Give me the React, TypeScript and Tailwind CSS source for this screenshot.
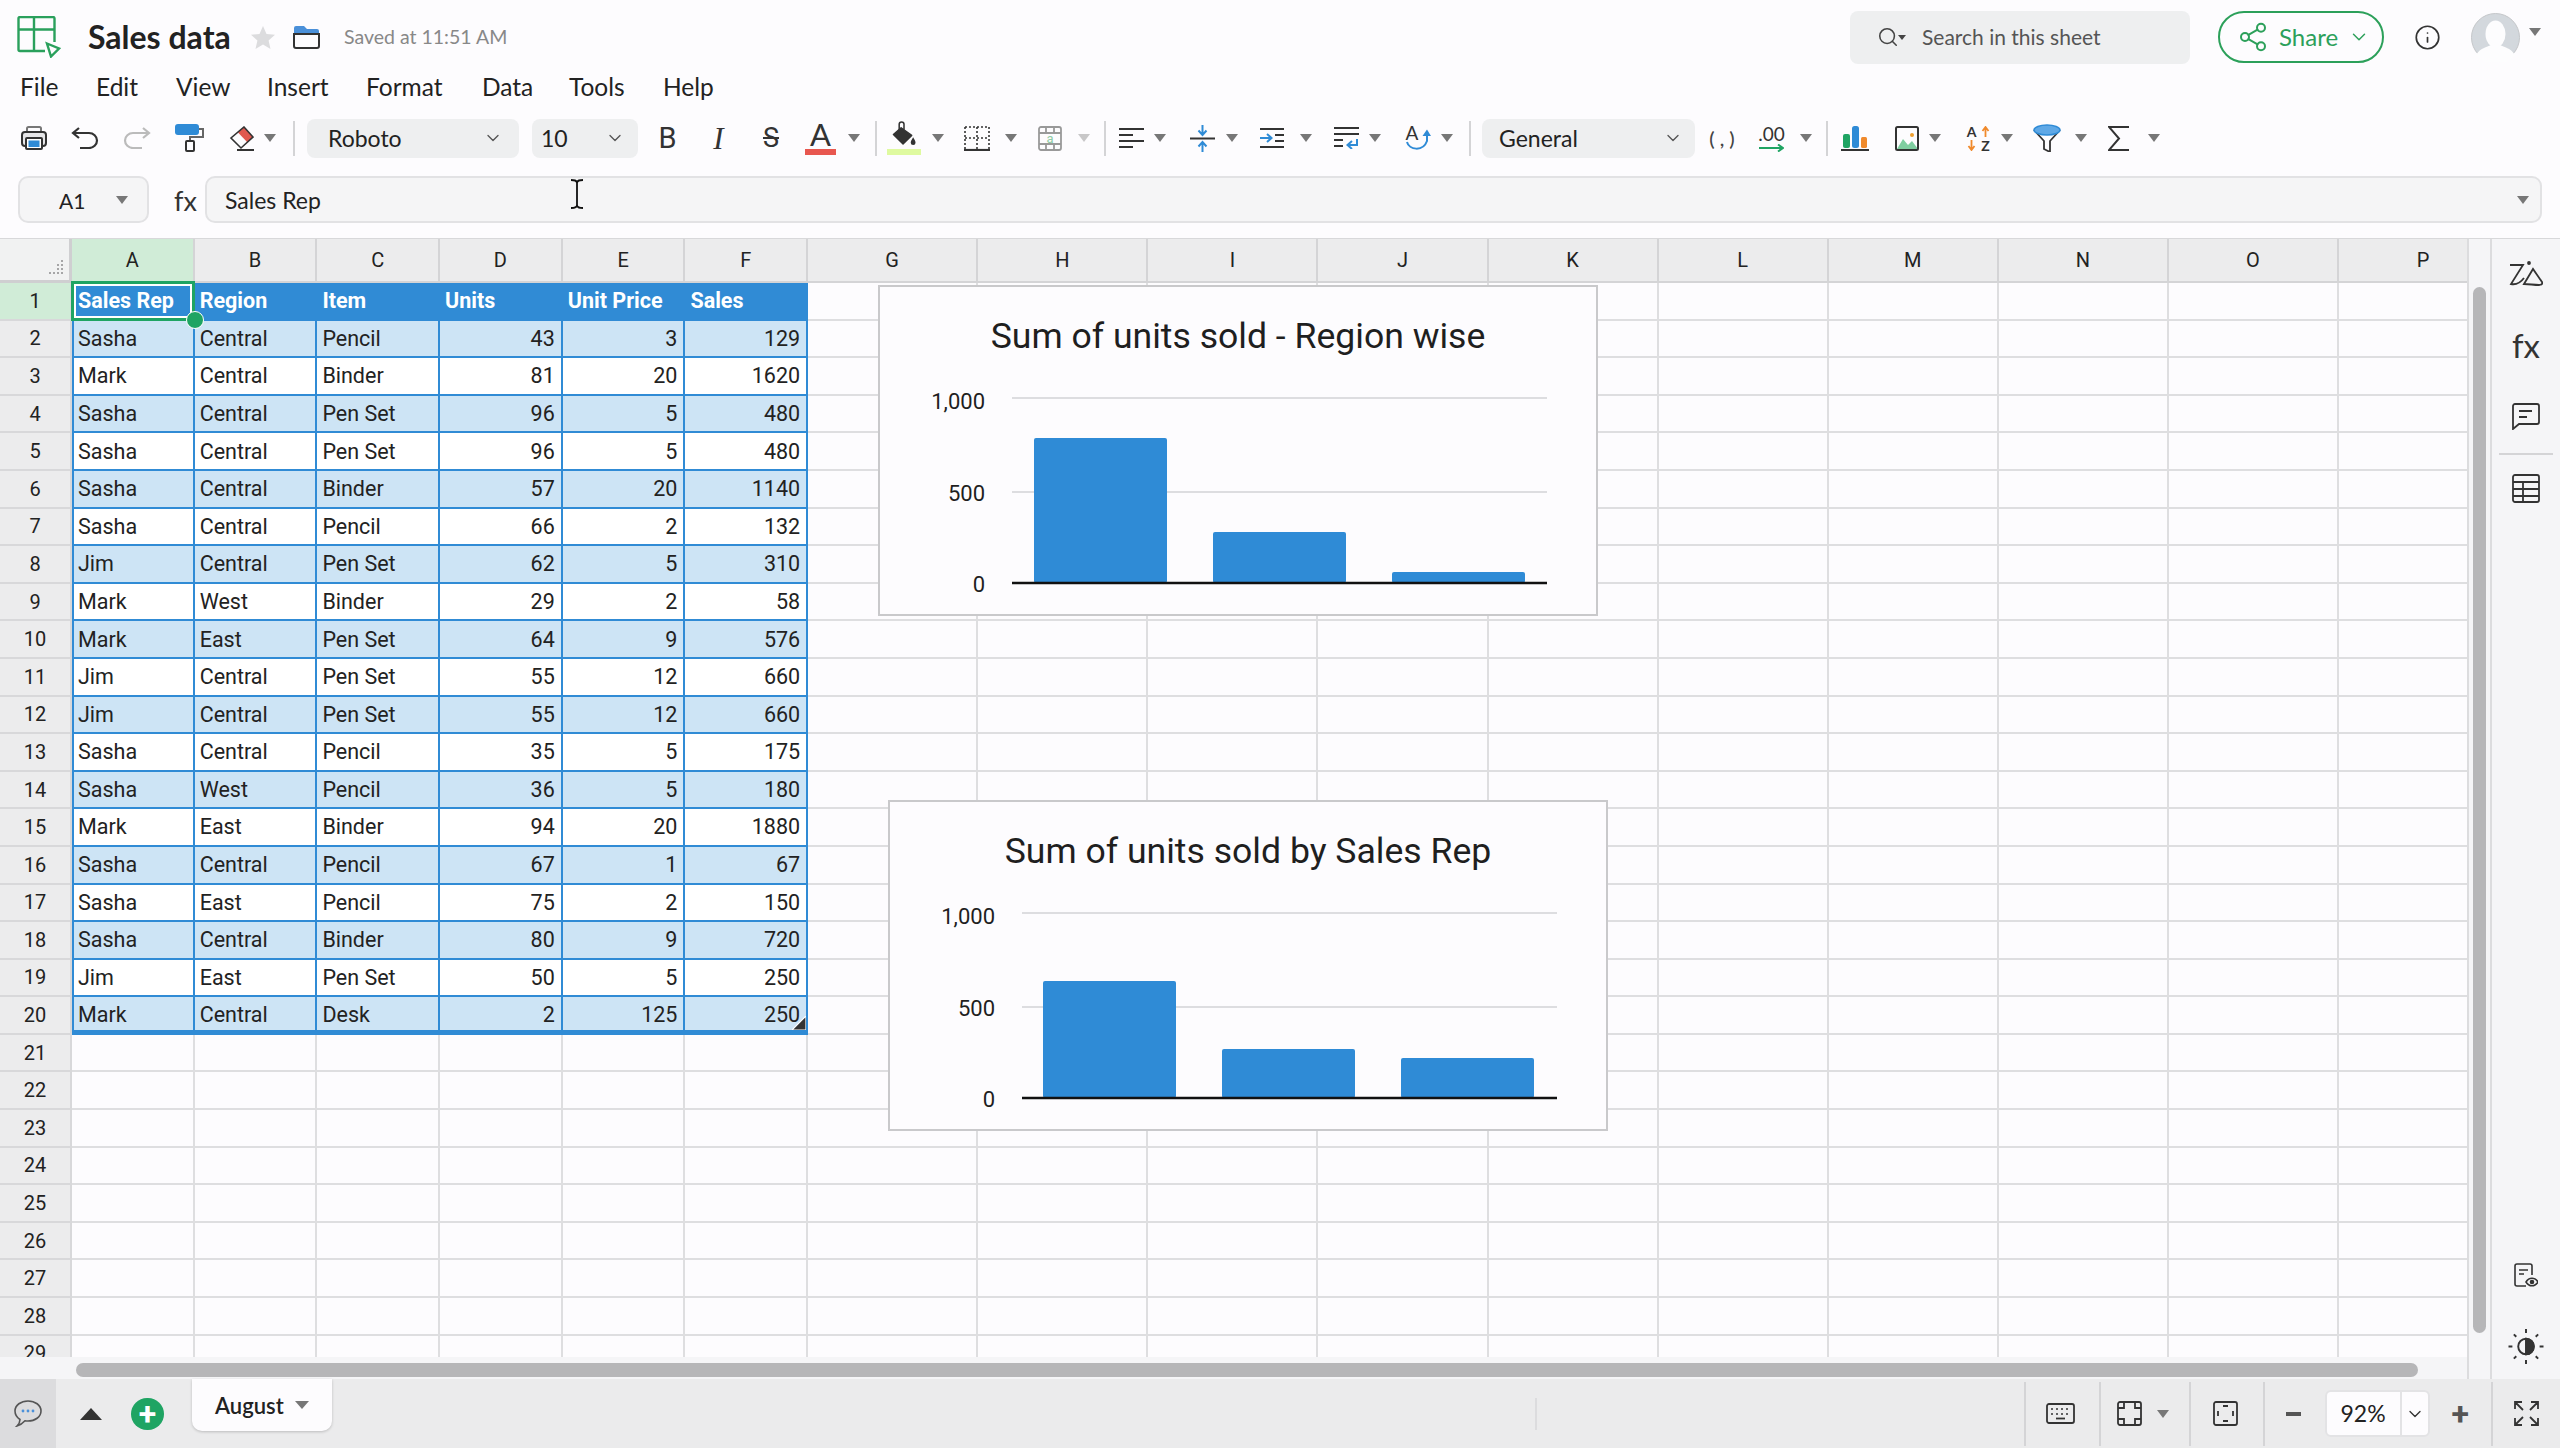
import { ChevronDown, Info, Search, Share2 } from "lucide-react";

const columns = ["A", "B", "C", "D", "E", "F", "G", "H", "I", "J", "K", "L", "M", "N", "O", "P"];

const sales: (string | number)[][] = [
  ["Sales Rep", "Region", "Item", "Units", "Unit Price", "Sales"],
  ["Sasha", "Central", "Pencil", 43, 3, 129],
  ["Mark", "Central", "Binder", 81, 20, 1620],
  ["Sasha", "Central", "Pen Set", 96, 5, 480],
  ["Sasha", "Central", "Pen Set", 96, 5, 480],
  ["Sasha", "Central", "Binder", 57, 20, 1140],
  ["Sasha", "Central", "Pencil", 66, 2, 132],
  ["Jim", "Central", "Pen Set", 62, 5, 310],
  ["Mark", "West", "Binder", 29, 2, 58],
  ["Mark", "East", "Pen Set", 64, 9, 576],
  ["Jim", "Central", "Pen Set", 55, 12, 660],
  ["Jim", "Central", "Pen Set", 55, 12, 660],
  ["Sasha", "Central", "Pencil", 35, 5, 175],
  ["Sasha", "West", "Pencil", 36, 5, 180],
  ["Mark", "East", "Binder", 94, 20, 1880],
  ["Sasha", "Central", "Pencil", 67, 1, 67],
  ["Sasha", "East", "Pencil", 75, 2, 150],
  ["Sasha", "Central", "Binder", 80, 9, 720],
  ["Jim", "East", "Pen Set", 50, 5, 250],
  ["Mark", "Central", "Desk", 2, 125, 250],
];

const rowNumbers = Array.from({ length: 29 }, (_, i) => i + 1);
const menu = [
  { label: "File", className: "ml-[20px] w-[76px]" },
  { label: "Edit", className: "w-[80px]" },
  { label: "View", className: "w-[91px]" },
  { label: "Insert", className: "w-[99px]" },
  { label: "Format", className: "w-[116px]" },
  { label: "Data", className: "w-[87px]" },
  { label: "Tools", className: "w-[94px]" },
  { label: "Help", className: "w-[60px]" },
];

function Caret({ className = "" }: { className?: string }) {
  return (
    <span
      className={`h-0 w-0 shrink-0 border-x-[6px] border-t-[8px] border-x-transparent border-t-[#777] ${className}`}
    />
  );
}

function Sep({ className = "" }: { className?: string }) {
  return <span className={`h-[35px] w-[2px] shrink-0 bg-[#d4d4d6] ${className}`} />;
}

function Select({ label, className }: { label: string; className: string }) {
  return (
    <div
      className={`flex h-[39px] shrink-0 items-center justify-between rounded-[8px] bg-[#eeeff0] text-[23px] text-[#222] ${className}`}
    >
      <span>{label}</span>
      <ChevronDown className="h-[20px] w-[20px] text-[#555]" strokeWidth={1.6} />
    </div>
  );
}

function Logo() {
  return (
    <svg viewBox="0 0 44 42" className="ml-[17px] h-[42px] w-[44px] shrink-0" fill="none" stroke="#2aa05c" strokeWidth="2.4">
      <path d="M28 35H3a1.5 1.5 0 0 1-1.5-1.5V2.500A1.500 1.500 0 0 1 3 1h33a1.500 1.500 0 0 1 1.500 1.500V26" />
      <path d="M1.500 13.500H37.500M17 1V35" />
      <path d="M30 27.500L42 32.500L34 40.500Z" />
    </svg>
  );
}

function Folder() {
  return (
    <svg viewBox="0 0 27 24" className="ml-[18px] h-[24px] w-[27px] shrink-0">
      <path d="M3 1h8l3 3h10a2 2 0 0 1 2 2v4H1V3a2 2 0 0 1 2-2Z" fill="#4a90d9" />
      <path d="M1 9h25v12a2 2 0 0 1-2 2H3a2 2 0 0 1-2-2Z" fill="#fdfcfe" stroke="#333" strokeWidth="2" />
    </svg>
  );
}

function PrintIcon() {
  return (
    <svg viewBox="0 0 26 24" className="ml-[21px] h-[24px] w-[26px] shrink-0" fill="none">
      <path d="M6 6V2.500A1.500 1.500 0 0 1 7.500 1h11A1.500 1.500 0 0 1 20 2.500V6" stroke="#777" strokeWidth="2" />
      <rect x="1" y="6" width="24" height="14" rx="3" stroke="#333" strokeWidth="2" fill="#e6e6e8" />
      <rect x="5" y="12" width="16" height="11" rx="1" stroke="#333" strokeWidth="2" fill="#fff" />
      <rect x="7.500" y="14.500" width="11" height="6.500" fill="#2f8bd6" />
    </svg>
  );
}

function UndoIcon({ className, color, flip }: { className: string; color: string; flip?: boolean }) {
  return (
    <svg viewBox="0 0 28 22" className={`h-[22px] w-[28px] shrink-0 ${flip ? "-scale-x-100" : ""} ${className}`} fill="none" stroke={color} strokeWidth="2.200">
      <path d="M8 1L2 6L8 11" />
      <path d="M2 6H18a8 7.500 0 0 1 0 15H9" />
    </svg>
  );
}

function RollerIcon() {
  return (
    <svg viewBox="0 0 29 28" className="ml-[24px] h-[28px] w-[29px] shrink-0" fill="none">
      <rect x="0" y="0" width="24" height="11" rx="3" fill="#2f8bd6" />
      <path d="M24 5H28V13H15V17" stroke="#666" strokeWidth="2" />
      <rect x="11" y="17" width="8" height="10" rx="1" stroke="#333" strokeWidth="2" />
    </svg>
  );
}

function EraserIcon() {
  return (
    <svg viewBox="0 0 25 25" className="ml-[25px] h-[25px] w-[25px] shrink-0" fill="none">
      <path d="M15 1L24 11L18.500 16.500L9 6.500Z" fill="#e0584f" />
      <path d="M15 1L24 11L12 22L2 12Z" stroke="#333" strokeWidth="1.600" />
      <path d="M8 24H25" stroke="#333" strokeWidth="2" />
    </svg>
  );
}

function FillIcon() {
  return (
    <div className="ml-[10px] flex h-[34px] w-[34px] shrink-0 flex-col items-center justify-between">
      <svg viewBox="0 0 24 26" className="h-[25px] w-[24px]">
        <path d="M9 7L20 15L11 24L1 14Z" fill="#333" stroke="#333" strokeWidth="1.500" strokeLinejoin="round" />
        <path d="M7 10V3.500a2.500 2.500 0 0 1 5 0V9" fill="none" stroke="#333" strokeWidth="1.600" />
        <path d="M21.500 17c1.500 2.500 2.500 4 2.500 5.500a2.500 2.500 0 0 1-5 0c0-1.500 1-3 2.500-5.500Z" fill="#333" />
      </svg>
      <span className="h-[6px] w-full bg-[#dffaa0]" />
    </div>
  );
}

function BorderIcon() {
  return (
    <svg viewBox="0 0 26 25" className="ml-[20px] h-[25px] w-[26px] shrink-0" fill="none" stroke="#333">
      <path d="M1 1H25M1 1V24M25 1V24M13 1V24M1 12H25" strokeWidth="1.600" strokeDasharray="2 2" />
      <path d="M0 24H26" strokeWidth="2.200" />
    </svg>
  );
}

function MergeIcon() {
  return (
    <svg viewBox="0 0 24 25" className="ml-[21px] h-[25px] w-[24px] shrink-0" fill="none" stroke="#999" strokeWidth="1.800">
      <rect x="1" y="1" width="22" height="23" rx="2" fill="#fdfcfe" />
      <path d="M1 7H23M1 18H23M8 1V7M16 1V7M8 18V24M16 18V24" />
      <text x="12" y="16.500" textAnchor="middle" fontSize="13" fontFamily="Roboto, sans-serif" fill="#8dcba4" stroke="none">
        a
      </text>
    </svg>
  );
}

function AlignIcon() {
  return (
    <svg viewBox="0 0 25 20" className="ml-[13px] h-[20px] w-[25px] shrink-0" stroke="#333" strokeWidth="2">
      <path d="M0 1H25M0 7H14M0 13H25M0 19H14" />
    </svg>
  );
}

function ValignIcon() {
  return (
    <svg viewBox="0 0 25 27" className="ml-[24px] h-[27px] w-[25px] shrink-0" fill="none">
      <path d="M0 13.500H25" stroke="#333" strokeWidth="2" />
      <path d="M12.500 0V9M8.500 5.500L12.500 10L16.500 5.500M12.500 27V18M8.500 21.500L12.500 17L16.500 21.500" stroke="#2f8bd6" strokeWidth="2" />
    </svg>
  );
}

function IndentIcon() {
  return (
    <svg viewBox="0 0 24 20" className="ml-[22px] h-[20px] w-[24px] shrink-0" fill="none" strokeWidth="2">
      <path d="M0 1H24M0 19H24M15 7H24M15 13H24" stroke="#333" />
      <path d="M0 10H11M7 6L11.500 10L7 14" stroke="#2f8bd6" />
    </svg>
  );
}

function WrapIcon() {
  return (
    <svg viewBox="0 0 25 22" className="ml-[22px] h-[22px] w-[25px] shrink-0" fill="none" strokeWidth="2">
      <path d="M0 1H25M0 7H25M0 13H9M0 19H9" stroke="#333" />
      <path d="M23 12V18H14M18 14L13.500 18L18 22" stroke="#2f8bd6" />
    </svg>
  );
}

function RotateIcon() {
  return (
    <svg viewBox="0 0 26 26" className="ml-[24px] h-[26px] w-[26px] shrink-0" fill="none">
      <text x="7" y="15" textAnchor="middle" fontSize="19" fontFamily="Lato, sans-serif" fill="#333" stroke="none">
        A
      </text>
      <path d="M2 17c2 8 16 10 20-1V9" stroke="#2f8bd6" strokeWidth="2" />
      <path d="M17.500 11L22 4.500L26 11Z" fill="#2f8bd6" />
    </svg>
  );
}

function DecimalIcon() {
  return (
    <div className="ml-[24px] flex h-[28px] w-[25px] shrink-0 flex-col items-center justify-between">
      <span className="text-[19px] leading-[19px] text-[#333]">.00</span>
      <svg viewBox="0 0 25 8" className="h-[8px] w-[25px]" fill="none" stroke="#1fa463" strokeWidth="2">
        <path d="M0 4H23M19 0.500L24 4L19 7.500" />
      </svg>
    </div>
  );
}

function ChartIcon() {
  return (
    <svg viewBox="0 0 28 25" className="ml-[13px] h-[25px] w-[28px] shrink-0">
      <rect x="2" y="8" width="7" height="14" rx="2" fill="#1fa463" />
      <rect x="11" y="0" width="7" height="22" rx="2.500" fill="#2f8bd6" />
      <rect x="20" y="11" width="6" height="11" rx="1.500" fill="#f08a2c" />
      <path d="M0 24H28" stroke="#333" strokeWidth="2" />
    </svg>
  );
}

function ImageIcon() {
  return (
    <svg viewBox="0 0 24 25" className="ml-[26px] h-[25px] w-[24px] shrink-0" fill="none">
      <path d="M2 23L8 13L13 19L17 15L23 23Z" fill="#7fcea0" />
      <circle cx="17" cy="9" r="2" fill="#f0a030" />
      <rect x="1" y="1" width="22" height="23" rx="1.500" stroke="#333" strokeWidth="2" />
    </svg>
  );
}

function SortIcon() {
  return (
    <svg viewBox="0 0 26 25" className="ml-[25px] h-[25px] w-[26px] shrink-0" fill="none">
      <text x="5.500" y="11" textAnchor="middle" fontSize="14" fontWeight="700" fontFamily="Lato, sans-serif" fill="#333">
        A
      </text>
      <text x="19.500" y="24.500" textAnchor="middle" fontSize="14" fontWeight="700" fontFamily="Lato, sans-serif" fill="#333">
        Z
      </text>
      <path d="M19.500 11V2M16.500 5L19.500 1L22.500 5" stroke="#f08a2c" strokeWidth="1.800" />
      <path d="M5.500 14V23M2.500 20L5.500 24L8.500 20" stroke="#f08a2c" strokeWidth="1.800" />
    </svg>
  );
}

function FilterIcon() {
  return (
    <svg viewBox="0 0 28 28" className="ml-[20px] h-[28px] w-[28px] shrink-0" fill="none">
      <path d="M1 6L11 17V25L17 28V17L27 6" stroke="#333" strokeWidth="1.800" />
      <ellipse cx="14" cy="6" rx="13" ry="5" fill="#5fa8e6" stroke="#2f8bd6" strokeWidth="1.500" />
    </svg>
  );
}

function SigmaIcon() {
  return (
    <svg viewBox="0 0 21 25" className="ml-[21px] h-[25px] w-[21px] shrink-0" fill="none" stroke="#333" strokeWidth="2">
      <path d="M21 1H1L11 12.500L1 24H21" />
    </svg>
  );
}

function Cursor() {
  return (
    <svg viewBox="0 0 14 30" className="absolute left-[363px] top-[1px] h-[30px] w-[14px]" fill="none" stroke="#111" strokeWidth="1.800">
      <path d="M1 1c3 0 6 0 6 3v22c0 3-3 3-6 3M13 1c-3 0-6 0-6 3M13 29c-3 0-6 0-6-3" />
    </svg>
  );
}

function TopBar() {
  return (
    <div className="flex h-[74px] items-center">
      <Logo />
      <span className="ml-[27px] w-[144px] shrink-0 whitespace-nowrap text-[32px] font-bold leading-none text-[#222]">Sales data</span>
      <svg viewBox="0 0 24 23" className="ml-[19px] h-[23px] w-[24px] shrink-0" fill="#dcdcde">
        <path d="M12 0l3.500 8 8.500.8-6.400 5.700 1.900 8.500L12 18.500 4.500 23l1.900-8.500L0 8.800 8.500 8Z" />
      </svg>
      <Folder />
      <span className="ml-[24px] text-[19.500px] text-[#888]">Saved at 11:51 AM</span>
      <div className="ml-auto flex h-[53px] w-[340px] items-center rounded-[8px] bg-[#eeeff0] pl-[27px]">
        <Search className="h-[22px] w-[22px] text-[#444]" strokeWidth={1.7} />
        <span className="ml-[-1px] h-0 w-0 border-x-[4px] border-t-[5px] border-x-transparent border-t-[#444]" />
        <span className="ml-[16px] text-[21px] text-[#555]">Search in this sheet</span>
      </div>
      <div className="ml-[28px] flex h-[52px] w-[166px] items-center rounded-full border-2 border-[#2ca05a] pl-[17px] text-[#2ca05a]">
        <Share2 className="h-[32px] w-[32px]" strokeWidth={1.5} />
        <span className="ml-[10px] text-[24px]">Share</span>
        <ChevronDown className="ml-[10px] h-[22px] w-[22px]" strokeWidth={1.6} />
      </div>
      <Info className="ml-[30px] h-[27px] w-[27px] text-[#333]" strokeWidth={1.5} />
      <svg viewBox="0 0 49 49" className="ml-[30px] h-[49px] w-[49px] shrink-0">
        <circle cx="24.500" cy="24.500" r="24" fill="#d3d8dd" stroke="#c4c6c9" />
        <ellipse cx="24.500" cy="21" rx="10" ry="13.500" fill="#fdfdfe" />
        <path d="M5 42c4-7 11-8 15-10h9c4 2 11 3 15 10a24 24 0 0 1-39 0Z" fill="#fdfdfe" />
      </svg>
      <Caret className="ml-[9px] mr-[19px] mt-[-10px]" />
    </div>
  );
}

function Toolbar() {
  return (
    <div className="flex h-[76px] items-center">
      <PrintIcon />
      <UndoIcon className="ml-[24px]" color="#333" />
      <UndoIcon className="ml-[24px] w-[27px]" color="#bbb" flip />
      <RollerIcon />
      <EraserIcon />
      <Caret className="ml-[10px]" />
      <Sep className="ml-[17px]" />
      <Select label="Roboto" className="ml-[12px] w-[212px] pl-[21px] pr-[16px]" />
      <Select label="10" className="ml-[13px] w-[106px] pl-[9px] pr-[13px]" />
      <span className="ml-[20px] w-[19px] shrink-0 text-center font-[Roboto,sans-serif] text-[29px] leading-none text-[#333]">B</span>
      <span className="ml-[32px] w-[19px] shrink-0 text-center font-['Liberation_Serif',serif] text-[31px] italic leading-none text-[#333]">I</span>
      <span className="ml-[33px] w-[20px] shrink-0 text-center font-[Roboto,sans-serif] text-[27px] leading-none text-[#333] line-through">S</span>
      <div className="ml-[24px] flex h-[34px] w-[31px] shrink-0 flex-col items-center justify-between">
        <span className="font-[Lato,sans-serif] text-[31px] leading-[27px] text-[#333]">A</span>
        <span className="h-[6px] w-full bg-[#e8574f]" />
      </div>
      <Caret className="ml-[12px]" />
      <Sep className="ml-[15px]" />
      <FillIcon />
      <Caret className="ml-[11px]" />
      <BorderIcon />
      <Caret className="ml-[15px]" />
      <MergeIcon />
      <Caret className="ml-[16px] opacity-40" />
      <Sep className="ml-[14px]" />
      <AlignIcon />
      <Caret className="ml-[10px]" />
      <ValignIcon />
      <Caret className="ml-[11px]" />
      <IndentIcon />
      <Caret className="ml-[16px]" />
      <WrapIcon />
      <Caret className="ml-[10px]" />
      <RotateIcon />
      <Caret className="ml-[10px]" />
      <Sep className="ml-[16px]" />
      <Select label="General" className="ml-[11px] w-[213px] pl-[17px] pr-[12px]" />
      <span className="ml-[14px] w-[26px] shrink-0 whitespace-nowrap text-center text-[20px] font-medium text-[#444]">( , )</span>
      <DecimalIcon />
      <Caret className="ml-[16px]" />
      <Sep className="ml-[14px]" />
      <ChartIcon />
      <ImageIcon />
      <Caret className="ml-[10px]" />
      <SortIcon />
      <Caret className="ml-[9px]" />
      <FilterIcon />
      <Caret className="ml-[14px]" />
      <SigmaIcon />
      <Caret className="ml-[19px]" />
    </div>
  );
}

function FormulaBar() {
  return (
    <div className="flex h-[47px] items-stretch pr-[18px]">
      <div className="ml-[18px] flex w-[131px] items-center rounded-[10px] border-2 border-[#e2e2e4] bg-[#f5f5f6] pl-[39px]">
        <span className="pt-[2px] text-[21px] text-[#222]">A1</span>
        <Caret className="ml-[31px]" />
      </div>
      <span className="ml-[25px] w-[31px] self-center pt-[2px] font-[Lato,sans-serif] text-[27px] leading-none text-[#333]">fx</span>
      <div className="relative flex flex-1 items-center rounded-[10px] border-2 border-[#e2e2e4] bg-[#f5f5f6] pl-[18px] pr-[11px]">
        <span className="pt-[2px] text-[23px] text-[#222]">Sales Rep</span>
        <Cursor />
        <Caret className="ml-auto" />
      </div>
    </div>
  );
}

type Bar = { left: number; top: number };

function ChartCard({ title, bars, className }: { title: string; bars: Bar[]; className: string }) {
  return (
    <div className={`absolute flex h-[331px] w-[720px] flex-col border-2 border-[#c9c9cb] bg-[#fdfcfe] ${className}`}>
      <div className="flex h-[102px] shrink-0 items-center justify-center pb-[2px] font-[Roboto,sans-serif] text-[35.600px] text-[#1f1f1f]">{title}</div>
      <svg viewBox="2 104 716 225" className="h-[225px] w-[716px]">
        <path d="M134 113H669M134 207H669" stroke="#dddde0" strokeWidth="2" />
        {bars.map((bar) => (
          <rect key={bar.left} x={bar.left} y={bar.top} width="133" height={298 - bar.top} rx="2" fill="#2f8bd6" />
        ))}
        <path d="M134 298H669" stroke="#111" strokeWidth="2.500" />
        <g fontFamily="Roboto, sans-serif" fontSize="22" fill="#1f1f1f" textAnchor="end">
          <text x="107" y="124">1,000</text>
          <text x="107" y="216">500</text>
          <text x="107" y="307">0</text>
        </g>
      </svg>
    </div>
  );
}

function Sheet() {
  return (
    <div className="relative h-[1118px] overflow-hidden font-[Roboto,sans-serif] text-[21.5px] text-[#222]">
      <div className="grid w-max grid-cols-[72px_repeat(6,122.7px)_repeat(10,170.1px)] grid-rows-[44px_repeat(29,37.6px)]">
        <div className="flex items-end justify-end border-r-[3px] border-b-[3px] border-[#cfcfd1] bg-[#f1f2f2] pb-[5px] pr-[5px]">
          <svg viewBox="0 0 16 16" className="h-[16px] w-[16px]" fill="#8c8c8e">
            <circle cx="14" cy="2" r="1" />
            <circle cx="10" cy="6" r="1" />
            <circle cx="14" cy="6" r="1" />
            <circle cx="10" cy="10" r="1" />
            <circle cx="14" cy="10" r="1" />
            <circle cx="2" cy="14" r="1" />
            <circle cx="6" cy="14" r="1" />
            <circle cx="10" cy="14" r="1" />
            <circle cx="14" cy="14" r="1" />
          </svg>
        </div>
        {columns.map((col) => (
          <div
            key={col}
            className={`flex items-center justify-center border-r-2 border-b-2 border-[#d4d4d6] text-[20px] ${col === "A" ? "bg-[#d0ecd7]" : "bg-[#ececed]"}`}
          >
            {col}
          </div>
        ))}
        {rowNumbers.map((row) => (
          <Row key={row} row={row} />
        ))}
      </div>
      <ChartCard
        title="Sum of units sold - Region wise"
        className="left-[878px] top-[46px]"
        bars={[
          { left: 156, top: 153 },
          { left: 335, top: 247 },
          { left: 514, top: 287 },
        ]}
      />
      <ChartCard
        title="Sum of units sold by Sales Rep"
        className="left-[888px] top-[561px]"
        bars={[
          { left: 155, top: 181 },
          { left: 334, top: 249 },
          { left: 513, top: 258 },
        ]}
      />
    </div>
  );
}

function Row({ row }: { row: number }) {
  const values = sales[row - 1];
  return (
    <>
      <div
        className={`flex items-center justify-center border-r-[2px] border-b-2 border-[#d8d8da] text-[20px] ${row === 1 ? "bg-[#d0ecd7]" : "bg-[#ececed]"}`}
      >
        {row}
      </div>
      {columns.map((col, i) => {
        const value = values?.[i];
        if (values && i < 6) {
          const numeric = typeof value === "number";
          return (
            <div
              key={col}
              className={`relative flex items-center whitespace-nowrap pr-[6px] ${i === 0 ? "border-l-2 pl-[4px]" : "pl-[5px]"} ${row === 20 ? "border-b-[5px] pt-[3px]" : "border-b-2 pt-[1px]"} border-r-2 border-[#308bd5] ${numeric ? "justify-end" : ""} ${row === 1 ? "bg-[#308bd5] font-bold text-white" : row % 2 === 0 ? "bg-[#cde4f5]" : "bg-white"}`}
            >
              {value}
              {row === 1 && i === 0 && (
                <>
                  <span className="absolute -left-[3px] -right-[2px] -top-[2px] bottom-[-2px] border-[3px] border-[#1fa463] outline-2 -outline-offset-[5px] outline-white" />
                  <span className="absolute -bottom-[10px] -right-[11px] z-10 h-[18px] w-[18px] rounded-full border-[1.5px] border-white bg-[#1fa463]" />
                </>
              )}
              {row === 20 && i === 5 && (
                <svg viewBox="0 0 14 14" className="absolute bottom-0 right-0 h-[14px] w-[14px]">
                  <path d="M14 0V14H0Z" fill="#333" stroke="#fff" strokeWidth="1.200" />
                </svg>
              )}
            </div>
          );
        }
        return <div key={col} className="border-r-2 border-b-2 border-[#dedee0]" />;
      })}
    </>
  );
}

function SidePanel() {
  return (
    <div className="flex w-[68px] shrink-0 flex-col items-center bg-[#f5f5f7] pb-[15px] pt-[22px] text-[#333]">
      <svg viewBox="0 0 34 25" className="h-[25px] w-[34px]" fill="none" stroke="#333" strokeWidth="1.800">
        <path d="M1 4H14L2 23c5 1 10-2 13-6" />
        <path d="M15 23L24 8L33 21c1 2-1 3-3 3-5 0-10-1-15-1Z" />
        <circle cx="20" cy="2" r="1" fill="#333" />
      </svg>
      <span className="mt-[43px] font-[Lato,sans-serif] text-[33px] leading-[33px]">fx</span>
      <svg viewBox="0 0 28 27" className="mt-[41px] h-[27px] w-[28px]" fill="none" stroke="#333" strokeWidth="1.800">
        <path d="M3 1H25a2 2 0 0 1 2 2V19a2 2 0 0 1-2 2H7L1 26V3a2 2 0 0 1 2-2Z" />
        <path d="M7 8H20M7 14H15" />
      </svg>
      <span className="mt-[23px] h-[2px] w-[54px] bg-[#d4d4d6]" />
      <svg viewBox="0 0 28 29" className="mt-[19px] h-[29px] w-[28px]" fill="none" stroke="#333" strokeWidth="1.800">
        <rect x="1" y="1" width="26" height="27" rx="2" />
        <path d="M1 8H27M1 15H27M1 22H27M11 8V28" />
      </svg>
      <svg viewBox="0 0 24 24" className="mt-auto h-[24px] w-[24px]" fill="none" stroke="#333" strokeWidth="1.600">
        <path d="M12 23H3a2 2 0 0 1-2-2V3a2 2 0 0 1 2-2H16a2 2 0 0 1 2 2V12" />
        <path d="M5 7H14M5 11H10" />
        <path d="M12 19c3-5 9-5 12 0-3 5-9 5-12 0Z" />
        <circle cx="18" cy="19" r="1.500" fill="#333" />
      </svg>
      <svg viewBox="0 0 36 36" className="mt-[42px] h-[35px] w-[36px]" fill="none" stroke="#333" strokeWidth="2">
        <circle cx="18" cy="18" r="8" />
        <path d="M18 10a8 8 0 0 1 0 16Z" fill="#333" />
        <path d="M18 0V4M18 32V36M0 18H4M32 18H36M5.500 5.500L8 8M28 28L30.500 30.500M5.500 30.500L8 28M28 8L30.500 5.500" />
      </svg>
    </div>
  );
}

function BottomBar() {
  return (
    <div className="flex h-[69px] shrink-0 items-center bg-[#ebebec]">
      <div className="flex h-full w-[56px] shrink-0 items-center justify-center bg-[#dcdcde]">
        <svg viewBox="0 0 28 27" className="h-[27px] w-[28px]" fill="none">
          <path d="M14 1c7 0 13 4 13 10s-6 10-13 10c-1 0-2 0-3-.2C9 23 7 25 3 26c2-2 3-4 3-6.500C3 17.500 1 14.500 1 11 1 5 7 1 14 1Z" stroke="#555" strokeWidth="1.600" />
          <circle cx="9" cy="11" r="1.400" fill="#4a90d9" />
          <circle cx="14" cy="11" r="1.400" fill="#4a90d9" />
          <circle cx="19" cy="11" r="1.400" fill="#4a90d9" />
        </svg>
      </div>
      <span className="ml-[24px] h-0 w-0 shrink-0 border-x-[11px] border-b-[12px] border-x-transparent border-b-[#333]" />
      <span className="ml-[29px] flex h-[32px] w-[33px] shrink-0 items-center justify-center rounded-full bg-[#1fa463] font-[Roboto,sans-serif] text-[32px] font-bold leading-none text-white">
        +
      </span>
      <div className="ml-[28px] flex h-[52px] w-[140px] shrink-0 items-center self-start rounded-b-[10px] bg-[#fdfcfe] pl-[23px] shadow-[0_1px_3px_rgba(0,0,0,0.2)]">
        <span className="text-[22px] font-semibold text-[#222]">August</span>
        <Caret className="ml-[11px] border-x-[7px]" />
      </div>
      <span className="ml-[1203px] h-[32px] w-[2px] shrink-0 bg-[#dcdcde]" />
      <div className="ml-auto flex h-full items-center">
        <Sep className="h-[64px]" />
        <svg viewBox="0 0 29 21" className="ml-[20px] h-[21px] w-[29px] shrink-0" fill="none" stroke="#333">
          <rect x="1" y="1" width="27" height="19" rx="2" strokeWidth="1.800" />
          <path d="M5 6H7M10 6H12M15 6H17M20 6H22M5 11H7M10 11H12M15 11H17M20 11H22" strokeWidth="1.600" />
          <path d="M10 15.500H19" strokeWidth="1.800" />
        </svg>
        <Sep className="ml-[24px] h-[64px]" />
        <svg viewBox="0 0 25 25" className="ml-[16px] h-[25px] w-[25px] shrink-0" fill="none" stroke="#333" strokeWidth="1.800">
          <rect x="1" y="1" width="23" height="23" rx="2" />
          <path d="M7 1V7H1M18 1V7H24M7 24V18H1M18 24V18H24" />
        </svg>
        <Caret className="ml-[15px]" />
        <Sep className="ml-[20px] h-[64px]" />
        <svg viewBox="0 0 25 25" className="ml-[22px] h-[25px] w-[25px] shrink-0" fill="none" stroke="#333" strokeWidth="1.800">
          <rect x="1" y="1" width="23" height="23" rx="2" />
          <path d="M10 5H15M5 10V15M20 10V15M10 20H15" />
        </svg>
        <Sep className="ml-[25px] h-[64px]" />
        <span className="ml-[21px] h-[4px] w-[15px] bg-[#555]" />
        <div className="ml-[24px] flex h-[47px] w-[105px] items-center rounded-[6px] border-2 border-[#e3e3e5] bg-[#fdfcfe]">
          <span className="w-[75px] border-r-2 border-[#e3e3e5] text-center text-[23px] leading-[43px] text-[#222]">92%</span>
          <ChevronDown className="ml-[3px] h-[20px] w-[20px] text-[#333]" strokeWidth={1.6} />
        </div>
        <span className="ml-[22px] font-[Roboto,sans-serif] text-[32px] font-bold leading-none text-[#555]">+</span>
        <Sep className="ml-[22px] h-[64px]" />
        <svg viewBox="0 0 25 25" className="ml-[21px] mr-[21px] h-[25px] w-[25px] shrink-0" fill="none" stroke="#333" strokeWidth="1.800">
          <path d="M1 8V1H8M1 1L9 9M24 8V1H17M24 1L16 9M1 17V24H8M1 24L9 16M24 17V24H17M24 24L16 16" />
        </svg>
      </div>
    </div>
  );
}

export default function App() {
  return (
    <div className="flex h-[1448px] w-[2560px] flex-col overflow-hidden bg-[#fdfcfe] font-[Lato,sans-serif]">
      <TopBar />
      <div className="flex h-[26px] items-center text-[24.500px] text-[#222]">
        {menu.map((item) => (
          <span key={item.label} className={item.className}>
            {item.label}
          </span>
        ))}
      </div>
      <Toolbar />
      <FormulaBar />
      <div className="mt-[15px] flex h-[1141px] border-t border-[#d8d8da]">
        <div className="w-[2467px] shrink-0">
          <Sheet />
          <div className="flex h-[22px] bg-[#f5f5f7] pl-[76px] pr-[49px] pt-[6px]">
            <span className="h-[14px] w-full rounded-full bg-[#b6b6b8]" />
          </div>
        </div>
        <div className="w-[25px] shrink-0 border-x-2 border-[#dcdcde] bg-[#f5f5f7] px-[4px] pt-[48px]">
          <div className="h-[1046px] rounded-full bg-[#b6b6b8]" />
        </div>
        <SidePanel />
      </div>
      <BottomBar />
    </div>
  );
}
